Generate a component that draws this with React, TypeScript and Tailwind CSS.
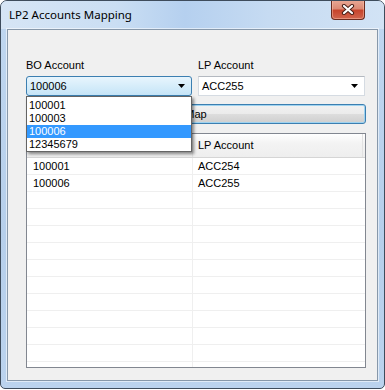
import React from "react";

const ctl = { fontFamily: '"Liberation Sans", Arial, sans-serif' };
const ttl = { fontFamily: '"Noto Sans", "Open Sans", sans-serif' };

function Arrow() {
  return (
    <svg width="7" height="4" viewBox="0 0 7 4" className="block">
      <path d="M0 0 H7 L3.5 4 Z" fill="#000" />
    </svg>
  );
}

export default function App() {
  const data: [string, string][] = [
    ["100001", "ACC254"],
    ["100006", "ACC255"],
  ];
  const rows = Array.from({ length: 14 }, (_, i) => data[i] ?? ["", ""]);
  const items = ["100001", "100003", "100006", "12345679"];

  return (
    <div className="w-[385px] h-[390px] bg-white" style={ctl}>
      <div className="w-[385px] h-[389px] flex flex-col rounded-t-[7px] rounded-b-[5px] border border-[#3e4c5c] bg-[linear-gradient(180deg,#c0d7f0_0%,#b6cfeb_60%,#bbd3ee_100%)] overflow-hidden">
        {/* title bar */}
        <div className="h-[28px] shrink-0 flex items-start justify-between bg-[linear-gradient(90deg,#d6e5f5_0%,#cadef3_30%,#b5d0ef_48%,#c6dbf2_70%,#d2e3f5_100%)]">
          <span className="ml-[8px] mt-[6px] text-[11.5px] leading-[16px] text-black" style={ttl}>
            LP2 Accounts Mapping
          </span>
          <div className="-mt-[1px] mr-[19px] w-[34px] h-[20px] rounded-b-[4px] border border-[#6a2a1e] border-t-0 bg-[linear-gradient(180deg,#e9a996_0%,#dc8a75_45%,#c7452d_55%,#d0654e_100%)] shadow-[inset_0_0_0_1px_rgba(255,200,180,0.45)] flex items-center justify-center">
            <svg width="14" height="11" viewBox="0 0 14 11">
              <path d="M3 2 L11 9 M11 2 L3 9" stroke="#4a2018" strokeWidth="4.2" strokeLinecap="round" />
              <path d="M3 2 L11 9 M11 2 L3 9" stroke="#ffffff" strokeWidth="2.2" strokeLinecap="round" />
            </svg>
          </div>
        </div>

        {/* client area */}
        <div className="mx-[6px] mb-[7px] flex-1 border border-[#8798aa] bg-[#f0f0f0] pl-[18px] pr-[11px] pt-[28px] flex flex-col shadow-[0_0_0_1px_rgba(255,255,255,0.55)]">
          <div className="grid grid-cols-[166px_167px] gap-x-[6px] text-[11px] text-black">
            <div className="h-[14px] leading-[14px]">BO Account</div>
            <div className="h-[14px] leading-[14px]">LP Account</div>
            {/* BO combo */}
            <div className="relative mt-[4px]">
              <div className="h-[20px] rounded-[3px] border border-[#3c7fb1] bg-[linear-gradient(180deg,#e8f5fd_0%,#d6edfa_50%,#c5e4f7_100%)] flex items-center justify-between pl-[3px] pr-[6px]">
                <span className="leading-[14px]">100006</span>
                <Arrow />
              </div>
              <div className="absolute z-10 left-0 top-[20px] w-[166px] border border-[#646464] bg-white pt-[2px] shadow-[2px_2px_3px_rgba(0,0,0,0.45)]">
                {items.map((it) => (
                  <div
                    key={it}
                    className={
                      it === "100006"
                        ? "h-[13px] leading-[13px] pl-[2px] bg-[#3399ff] text-white"
                        : "h-[13px] leading-[13px] pl-[2px] text-black"
                    }
                  >
                    {it}
                  </div>
                ))}
              </div>
            </div>
            {/* LP combo */}
            <div className="mt-[4px] h-[20px] border border-[#d5dbe2] border-t-[#b4b9c0] bg-white flex items-center justify-between pl-[3px] pr-[6px]">
              <span className="leading-[14px]">ACC255</span>
              <Arrow />
            </div>
          </div>

          {/* Map button */}
          <div className="mt-[8px] h-[20px] rounded-[3px] border border-[#3c7fb1] bg-[linear-gradient(180deg,#f2f2f2_0%,#ebebeb_50%,#dddddd_50%,#cfcfcf_100%)] shadow-[inset_0_0_0_1px_#9fd3f0] flex items-center justify-center text-[11px] text-black">
            Map
          </div>

          {/* grid */}
          <div className="mt-[9px] h-[235px] border border-[#828790] bg-white overflow-hidden text-[11px] text-black">
            <div className="h-[24px] flex border-b border-[#d5d5d5] bg-[linear-gradient(180deg,#ffffff_0%,#f3f3f3_40%,#eeeeee_100%)]">
              <div className="w-[166px] border-r border-[#e2e2e2] pl-[6px]" />
              <div className="w-[170px] border-r border-[#e2e2e2] pl-[5px] flex items-center">LP Account</div>
            </div>
            {rows.map((r, i) => (
              <div key={i} className="h-[17px] flex border-b border-[#efefef]">
                <div className="w-[166px] border-r border-[#efefef] pl-[6px] leading-[17px]">{r[0]}</div>
                <div className="w-[170px] pl-[5px] leading-[17px]">{r[1]}</div>
              </div>
            ))}
          </div>
        </div>
      </div>
    </div>
  );
}
